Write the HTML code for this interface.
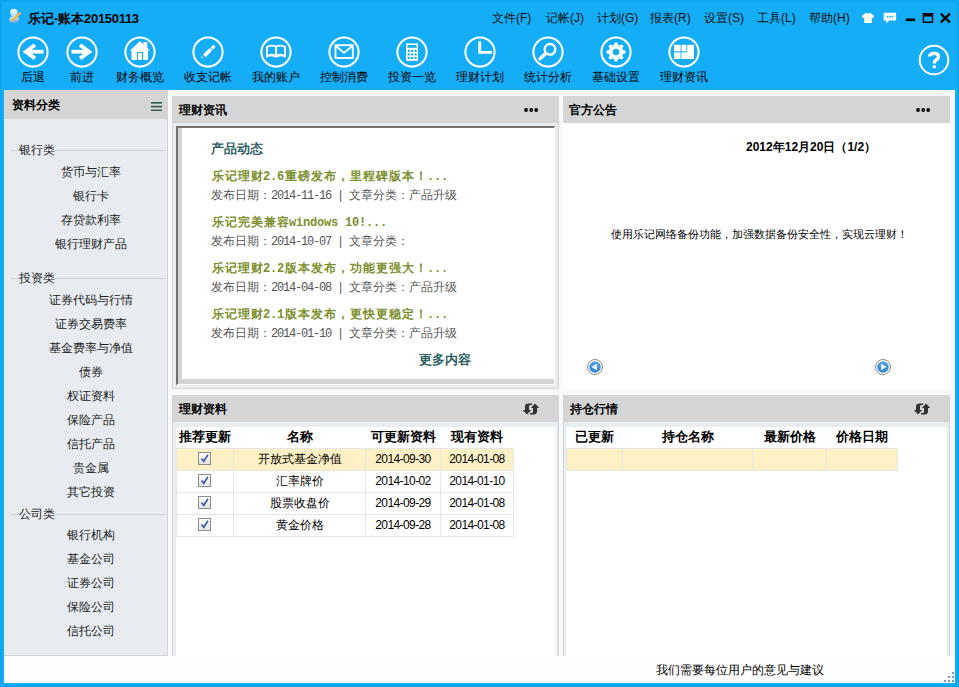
<!DOCTYPE html>
<html><head><meta charset="utf-8">
<style>
*{margin:0;padding:0;box-sizing:border-box}
html,body{width:959px;height:687px;overflow:hidden}
body{position:relative;background:#15adf5;font-family:"Liberation Sans",sans-serif;font-size:12px;color:#000}
.a{position:absolute}
.lf{left:0;top:0;width:2px;height:687px;background:#0aa6f0}
#content{left:4px;top:90px;width:951px;height:593px;background:#f8f9fb}
.title{left:28px;top:10px;font-size:13px;font-weight:bold;white-space:nowrap;letter-spacing:-0.3px}
.menu{top:9.5px;font-size:12px;white-space:nowrap;color:#111}
.tb{top:35px;width:68px;height:50px}
.tb svg{position:absolute;left:50%;top:1px;margin-left:-16px}
.tb span{position:absolute;left:0;right:0;top:34px;text-align:center;font-size:12px;white-space:nowrap;color:#000}
.hdr{background:#d5d5d5;height:27px;font-weight:bold;font-size:12px;line-height:27px;padding-left:6px;white-space:nowrap}
.dots{position:absolute;top:11px;right:18px}
.side{left:4px;top:90px;width:164px;height:566px;background:#e8ecf0;border-right:1px solid #d4d4d4;border-bottom:1px solid #d4d4d4}
.side .hdr{position:absolute;left:0;top:0;width:164px;height:29px;line-height:30px;padding-left:8px}
.grp{position:absolute;left:7px;width:155px;height:1px;background:#cfd3d6}
.grp span{position:absolute;left:8px;top:-8px;background:#e8ecf0;padding:0;line-height:16px;color:#222}
.it{position:absolute;left:0;width:164px;padding-left:9px;text-align:center;line-height:16px;color:#222;white-space:nowrap}
.panel{background:#e9edf0;border:1px solid #d4d4d4;border-top:0}
.ph{position:absolute;left:0;top:0;right:0;height:27px;background:#d5d5d5;font-weight:bold;line-height:28px;padding-left:6px}

.ib{position:absolute;left:3px;top:30px;width:379px;height:259px;border-top:2px solid #707070;border-left:2px solid #707070;border-right:1px solid #fff;border-bottom:1px solid #fff;background:#d4d4d4}
.ibw{position:absolute;left:4px;top:0;right:0;bottom:5px;background:#fff}
.nt{position:absolute;left:29px;font-size:12px;line-height:14px;font-weight:bold;color:#7b8f2c;white-space:nowrap}
.nt i{width:13px}
.nd{position:absolute;left:29px;font-size:12px;line-height:14px;color:#555;white-space:nowrap}
.nd b{font-family:"Liberation Mono",monospace;font-weight:normal;font-size:12px;letter-spacing:-1.2px}
.tbl{position:absolute;border-collapse:collapse;table-layout:fixed}
.tbl td,.tbl th{height:22px;text-align:center;white-space:nowrap;padding:0;overflow:hidden}
.tbl th{font-weight:bold;font-size:13px;height:21px}
.tbl td{border:1px solid #e6e6e6;font-size:12px}
.tbl .dt{letter-spacing:-0.6px}
.tbl tr.y td{background:#fdf0c5}
.cb{display:inline-block;width:13px;height:13px;border:1px solid #8c8c8c;background:linear-gradient(#fff,#e4e4e4);vertical-align:middle;position:relative;top:-1px;left:-1px}
.ref{position:absolute;right:19px;top:7.5px}
i{font-style:normal;display:inline-block;width:1em;text-align:center}
</style></head>
<body>
<div class="a lf"></div><div class="a" style="left:0;top:0;width:959px;height:2px;background:#0aa6f0"></div><div class="a" style="left:957px;top:0;width:2px;height:687px;background:#0aa6f0"></div><div class="a" style="left:0;top:685px;width:959px;height:2px;background:#0aa6f0"></div>
<!-- title bar -->
<svg class="a" style="left:4px;top:6px" width="24" height="22" viewBox="0 0 24 22">
 <defs><linearGradient id="hg" x1="0" y1="0" x2="0" y2="1"><stop offset="0" stop-color="#f0faff"/><stop offset="1" stop-color="#b8dffa"/></linearGradient>
 <linearGradient id="bg2" x1="0" y1="0" x2="0" y2="1"><stop offset="0" stop-color="#d8f0ff"/><stop offset="1" stop-color="#5d9ff0"/></linearGradient></defs>
 <ellipse cx="10" cy="13.6" rx="5" ry="3.6" fill="url(#bg2)"/>
 <circle cx="9.9" cy="6.4" r="3.7" fill="url(#hg)"/>
 <line x1="8.4" y1="14.5" x2="15.6" y2="7.7" stroke="#f3b62c" stroke-width="2.3" stroke-linecap="round"/>
 <circle cx="16" cy="7.3" r="1.1" fill="#f0a0a0"/>
</svg>
<div class="a title"><i>乐</i><i>记</i>-<i>账</i><i>本</i>20150113</div>
<div class="a menu" style="left:492px"><i>文</i><i>件</i>(F)</div>
<div class="a menu" style="left:546px"><i>记</i><i>帐</i>(J)</div>
<div class="a menu" style="left:597px"><i>计</i><i>划</i>(G)</div>
<div class="a menu" style="left:650px"><i>报</i><i>表</i>(R)</div>
<div class="a menu" style="left:704px"><i>设</i><i>置</i>(S)</div>
<div class="a menu" style="left:757px"><i>工</i><i>具</i>(L)</div>
<div class="a menu" style="left:809px"><i>帮</i><i>助</i>(H)</div>

<svg class="a" style="left:0;top:0" width="959" height="90" viewBox="0 0 959 90">
 <g fill="none" stroke="#fff" stroke-width="2.05">
  <circle cx="33" cy="52" r="14.6"/><circle cx="82" cy="52" r="14.6"/><circle cx="140" cy="52" r="14.6"/>
  <circle cx="208" cy="52" r="14.6"/><circle cx="276" cy="52" r="14.6"/><circle cx="344" cy="52" r="14.6"/>
  <circle cx="412" cy="52" r="14.6"/><circle cx="480" cy="52" r="14.6"/><circle cx="548" cy="52" r="14.6"/>
  <circle cx="616" cy="52" r="14.6"/><circle cx="684" cy="52" r="14.6"/>
  <circle cx="934" cy="60" r="14.3" stroke-width="2"/>
 </g>
 <!-- back -->
 <g fill="none" stroke="#fff" stroke-width="3.8" stroke-linejoin="miter">
  <polyline points="35,45 25.8,51.7 35,58.4"/><line x1="26" y1="51.7" x2="43.5" y2="51.7"/>
  <polyline points="80,45 89.2,51.7 80,58.4"/><line x1="89" y1="51.7" x2="71.5" y2="51.7"/>
 </g>
 <!-- house -->
 <path fill="#fff" d="M140,41 L150,50.6 L148,50.6 L148,60 L131.5,60 L131.5,50.6 L130,50.6 Z M143.5,42 L147.3,42 L147.3,48 L143.5,45 Z"/>
 <path fill="#15adf5" d="M137,52 h6.1 v8.4 h-6.1z"/><path fill="#fff" d="M138,53 h3.9 v6.9 h-3.9z"/>
 <!-- pencil -->
 <line x1="204.3" y1="55.9" x2="211" y2="49.3" stroke="#fff" stroke-width="3.6"/>
 <line x1="212.6" y1="47.6" x2="213.5" y2="46.7" stroke="#fff" stroke-width="3.4" stroke-linecap="round"/>
 <path fill="#fff" d="M200.9,58.3 L201.7,56.2 L203.1,57.6 Z"/>
 <!-- book -->
 <path fill="#fff" fill-rule="evenodd" d="M266,46.2 Q271,43.4 276,45.6 Q281,43.4 286,46.2 L286,57.8 Q281,54.8 276,57.8 Q271,54.8 266,57.8 Z M268,47.4 Q271.5,45.8 275,47.1 L275,54.4 Q271.5,52.8 268,54.6 Z M277.1,47.1 Q280.5,45.8 284,47.4 L284,54.6 Q280.5,52.8 277.1,54.4 Z"/>
 <!-- mail -->
 <g fill="none" stroke="#fff" stroke-width="1.9">
  <rect x="335.5" y="45.2" width="17.3" height="12.8"/>
  <polyline points="336,46 344,52.9 352.4,46" stroke-width="1.7"/>
 </g>
 <!-- calculator -->
 <rect x="406" y="43.4" width="12" height="17.4" fill="#fff"/>
 <g fill="#15adf5">
  <rect x="407.5" y="45" width="9" height="2.8"/>
  <circle cx="408.8" cy="50.9" r="1.2"/><circle cx="412.1" cy="50.9" r="1.2"/><circle cx="415.6" cy="50.9" r="1.2"/>
  <circle cx="408.8" cy="54.4" r="1.2"/><circle cx="412.1" cy="54.4" r="1.2"/><circle cx="415.6" cy="54.4" r="1.2"/>
  <circle cx="408.8" cy="57.9" r="1.2"/><circle cx="412.1" cy="57.9" r="1.2"/><circle cx="415.6" cy="57.9" r="1.2"/>
 </g>
 <!-- clock -->
 <path fill="#fff" d="M478.3,41.2 h2.9 v9.7 h10.7 v2.9 h-13.6 z"/>
 <!-- search -->
 <circle cx="550" cy="49.3" r="5.3" fill="none" stroke="#fff" stroke-width="2.4"/>
 <line x1="540" y1="58.8" x2="545.6" y2="53.6" stroke="#fff" stroke-width="3.4" stroke-linecap="round"/>
 <!-- gear -->
 <g fill="#fff">
  <circle cx="616" cy="52" r="7.4"/>
  <g id="teeth">
   <path d="M614.6,42.6 h2.8 l0.5,3 h-3.8z"/><path d="M614.6,61.4 h2.8 l0.5,-3 h-3.8z"/>
   <path d="M606.6,50.6 v2.8 l3,0.5 v-3.8z"/><path d="M625.4,50.6 v2.8 l-3,0.5 v-3.8z"/>
  </g>
  <use href="#teeth" transform="rotate(45 616 52)"/>
 </g>
 <circle cx="616" cy="52" r="3.2" fill="#15adf5"/>
 <!-- grid -->
 <g fill="#fff">
  <rect x="674" y="44.8" width="6.6" height="6.5"/>
  <rect x="681.4" y="44.8" width="5" height="6.5"/>
  <rect x="687.2" y="44.8" width="6.8" height="14.2"/>
  <rect x="681.4" y="52.4" width="12.6" height="6.6"/>
  <rect x="674" y="52.4" width="6.6" height="6.6"/>
 </g>
 <path d="M929.7,56.6 Q929.7,53.4 934.1,53.4 Q938.5,53.4 938.5,56.6 Q938.5,58.8 936.2,60 Q934.3,61 934.3,63.4" fill="none" stroke="#fff" stroke-width="3.3"/><circle cx="934.3" cy="66.8" r="1.8" fill="#fff"/>
 <!-- title icons -->
 <path fill="#fff" d="M865.5,13.1 L867.2,13.1 Q868,14.6 868.8,13.1 L870.5,13.1 L874.2,16 L873,18.3 L871.8,17.6 L871.8,22.9 L864.2,22.9 L864.2,17.6 L863,18.3 L861.7,16 Z"/>
 <path fill="#fff" d="M884.5,12.8 h10.8 q0.8,0 0.8,0.8 v6.2 q0,0.8 -0.8,0.8 h-6.3 l-2.7,3.1 v-3.1 h-1.8 q-0.8,0 -0.8,-0.8 v-6.2 q0,-0.8 0.8,-0.8z"/>
 <g fill="#15adf5"><rect x="886.8" y="16" width="1.6" height="1.6"/><rect x="889.3" y="16" width="1.6" height="1.6"/><rect x="891.8" y="16" width="1.6" height="1.6"/></g>
 <rect x="905.8" y="18.5" width="9.4" height="2.6" fill="#000"/>
 <path fill="#000" d="M922.7,13.1 h10.5 v9.8 h-10.5z M924.1,16.4 v5.1 h7.7 v-5.1z" fill-rule="evenodd"/>
 <g stroke="#000" stroke-width="2.2"><line x1="940.8" y1="13.6" x2="949.9" y2="22.4"/><line x1="949.9" y1="13.6" x2="940.8" y2="22.4"/></g>
</svg>
<div class="a tb" style="left:-1px"><span><i>后</i><i>退</i></span></div>
<div class="a tb" style="left:48px"><span><i>前</i><i>进</i></span></div>
<div class="a tb" style="left:106px"><span><i>财</i><i>务</i><i>概</i><i>览</i></span></div>
<div class="a tb" style="left:174px"><span><i>收</i><i>支</i><i>记</i><i>帐</i></span></div>
<div class="a tb" style="left:242px"><span><i>我</i><i>的</i><i>账</i><i>户</i></span></div>
<div class="a tb" style="left:310px"><span><i>控</i><i>制</i><i>消</i><i>费</i></span></div>
<div class="a tb" style="left:378px"><span><i>投</i><i>资</i><i>一</i><i>览</i></span></div>
<div class="a tb" style="left:446px"><span><i>理</i><i>财</i><i>计</i><i>划</i></span></div>
<div class="a tb" style="left:514px"><span><i>统</i><i>计</i><i>分</i><i>析</i></span></div>
<div class="a tb" style="left:582px"><span><i>基</i><i>础</i><i>设</i><i>置</i></span></div>
<div class="a tb" style="left:650px"><span><i>理</i><i>财</i><i>资</i><i>讯</i></span></div>

<div id="content" class="a"></div>

<!-- sidebar -->
<div class="a side">
 <div class="hdr"><i>资</i><i>料</i><i>分</i><i>类</i></div>
 <div class="grp" style="top:60px"><span><i>银</i><i>行</i><i>类</i></span></div>
 <div class="it" style="top:73.5px"><i>货</i><i>币</i><i>与</i><i>汇</i><i>率</i></div>
 <div class="it" style="top:97.5px"><i>银</i><i>行</i><i>卡</i></div>
 <div class="it" style="top:121.5px"><i>存</i><i>贷</i><i>款</i><i>利</i><i>率</i></div>
 <div class="it" style="top:145.5px"><i>银</i><i>行</i><i>理</i><i>财</i><i>产</i><i>品</i></div>
 <div class="grp" style="top:188px"><span><i>投</i><i>资</i><i>类</i></span></div>
 <div class="it" style="top:201.5px"><i>证</i><i>券</i><i>代</i><i>码</i><i>与</i><i>行</i><i>情</i></div>
 <div class="it" style="top:225.5px"><i>证</i><i>券</i><i>交</i><i>易</i><i>费</i><i>率</i></div>
 <div class="it" style="top:249.5px"><i>基</i><i>金</i><i>费</i><i>率</i><i>与</i><i>净</i><i>值</i></div>
 <div class="it" style="top:273.5px"><i>债</i><i>券</i></div>
 <div class="it" style="top:297.5px"><i>权</i><i>证</i><i>资</i><i>料</i></div>
 <div class="it" style="top:321.5px"><i>保</i><i>险</i><i>产</i><i>品</i></div>
 <div class="it" style="top:345.5px"><i>信</i><i>托</i><i>产</i><i>品</i></div>
 <div class="it" style="top:369.5px"><i>贵</i><i>金</i><i>属</i></div>
 <div class="it" style="top:393.5px"><i>其</i><i>它</i><i>投</i><i>资</i></div>
 <div class="grp" style="top:424px"><span><i>公</i><i>司</i><i>类</i></span></div>
 <div class="it" style="top:437px"><i>银</i><i>行</i><i>机</i><i>构</i></div>
 <div class="it" style="top:461px"><i>基</i><i>金</i><i>公</i><i>司</i></div>
 <div class="it" style="top:485px"><i>证</i><i>券</i><i>公</i><i>司</i></div>
 <div class="it" style="top:509px"><i>保</i><i>险</i><i>公</i><i>司</i></div>
 <div class="it" style="top:533px"><i>信</i><i>托</i><i>公</i><i>司</i></div>
 <svg style="position:absolute;left:147px;top:12px" width="11" height="9"><g fill="#2c5a4c"><rect x="0" y="0" width="11" height="1.6"/><rect x="0" y="3.8" width="11" height="1.6"/><rect x="0" y="7.6" width="11" height="1.6"/></g></svg>
</div>

<!-- panels -->
<div class="a panel" style="left:172px;top:96px;width:387px;height:293px"><div class="ph"><i>理</i><i>财</i><i>资</i><i>讯</i><svg class="dots" width="16" height="6" viewBox="0 0 16 6"><g fill="#000"><circle cx="2" cy="3" r="1.9"/><circle cx="7.2" cy="3" r="1.9"/><circle cx="12.2" cy="3" r="1.9"/></g></svg></div><div class="ib"><div class="ibw"><div class="nt" style="top:13.5px;color:#2f5f62;font-size:13px"><i>产</i><i>品</i><i>动</i><i>态</i></div><div class="nt" style="top:41px"><i>乐</i><i>记</i><i>理</i><i>财</i><b style="font-family:Liberation Mono;font-size:12px;letter-spacing:-0.2px">2.6</b><i>重</i><i>磅</i><i>发</i><i>布</i><i>，</i><i>里</i><i>程</i><i>碑</i><i>版</i><i>本</i><i>！</i><b style="font-family:Liberation Mono;font-size:12px;letter-spacing:-0.2px">...</b></div><div class="nd" style="top:59.5px"><i>发</i><i>布</i><i>日</i><i>期</i><i>：</i><b>2014-11-16 | </b><i>文</i><i>章</i><i>分</i><i>类</i><i>：</i><i>产</i><i>品</i><i>升</i><i>级</i></div><div class="nt" style="top:87px"><i>乐</i><i>记</i><i>完</i><i>美</i><i>兼</i><i>容</i><b style="font-family:Liberation Mono;font-size:12px;letter-spacing:-0.2px">windows 10!...</b></div><div class="nd" style="top:105.5px"><i>发</i><i>布</i><i>日</i><i>期</i><i>：</i><b>2014-10-07 | </b><i>文</i><i>章</i><i>分</i><i>类</i><i>：</i></div><div class="nt" style="top:133px"><i>乐</i><i>记</i><i>理</i><i>财</i><b style="font-family:Liberation Mono;font-size:12px;letter-spacing:-0.2px">2.2</b><i>版</i><i>本</i><i>发</i><i>布</i><i>，</i><i>功</i><i>能</i><i>更</i><i>强</i><i>大</i><i>！</i><b style="font-family:Liberation Mono;font-size:12px;letter-spacing:-0.2px">...</b></div><div class="nd" style="top:151.5px"><i>发</i><i>布</i><i>日</i><i>期</i><i>：</i><b>2014-04-08 | </b><i>文</i><i>章</i><i>分</i><i>类</i><i>：</i><i>产</i><i>品</i><i>升</i><i>级</i></div><div class="nt" style="top:179px"><i>乐</i><i>记</i><i>理</i><i>财</i><b style="font-family:Liberation Mono;font-size:12px;letter-spacing:-0.2px">2.1</b><i>版</i><i>本</i><i>发</i><i>布</i><i>，</i><i>更</i><i>快</i><i>更</i><i>稳</i><i>定</i><i>！</i><b style="font-family:Liberation Mono;font-size:12px;letter-spacing:-0.2px">...</b></div><div class="nd" style="top:197.5px"><i>发</i><i>布</i><i>日</i><i>期</i><i>：</i><b>2014-01-10 | </b><i>文</i><i>章</i><i>分</i><i>类</i><i>：</i><i>产</i><i>品</i><i>升</i><i>级</i></div><div class="nt" style="top:225px;left:237px;color:#2f5f62;font-size:13px"><i>更</i><i>多</i><i>内</i><i>容</i></div></div></div></div>
<div class="a" style="left:563px;top:96px;width:387px;height:293px;background:#fff"><div class="ph"><i>官</i><i>方</i><i>公</i><i>告</i><svg class="dots" width="16" height="6" viewBox="0 0 16 6"><g fill="#000"><circle cx="2" cy="3" r="1.9"/><circle cx="7.2" cy="3" r="1.9"/><circle cx="12.2" cy="3" r="1.9"/></g></svg></div><div class="a" style="left:183px;top:44px;font-weight:bold;font-size:12px;line-height:14px;white-space:nowrap">2012<i>年</i>12<i>月</i>20<i>日</i><i>（</i>1/2<i>）</i></div><div class="a" style="left:48px;top:131px;font-size:11px;line-height:14px;white-space:nowrap"><i>使</i><i>用</i><i>乐</i><i>记</i><i>网</i><i>络</i><i>备</i><i>份</i><i>功</i><i>能</i><i>，</i><i>加</i><i>强</i><i>数</i><i>据</i><i>备</i><i>份</i><i>安</i><i>全</i><i>性</i><i>，</i><i>实</i><i>现</i><i>云</i><i>理</i><i>财</i><i>！</i></div><svg class="a" style="left:24px;top:262.7px" width="16" height="16" viewBox="0 0 16 16"><defs><linearGradient id="gl" x1="0" y1="0" x2="0" y2="1"><stop offset="0" stop-color="#5aa6e6"/><stop offset="1" stop-color="#2f7fcf"/></linearGradient></defs><circle cx="8" cy="8" r="7.5" fill="#fff" stroke="#8a8a8a" stroke-width="1"/><circle cx="8" cy="8" r="5.8" fill="url(#gl)"/><path fill="#fff" d="M4.6,8 L9.9,4.7 L9.9,11.3Z"/></svg><svg class="a" style="left:312.4px;top:262.7px" width="16" height="16" viewBox="0 0 16 16"><defs><linearGradient id="gr" x1="0" y1="0" x2="0" y2="1"><stop offset="0" stop-color="#5aa6e6"/><stop offset="1" stop-color="#2f7fcf"/></linearGradient></defs><circle cx="8" cy="8" r="7.5" fill="#fff" stroke="#8a8a8a" stroke-width="1"/><circle cx="8" cy="8" r="5.8" fill="url(#gr)"/><path fill="#fff" d="M11.4,8 L6.1,4.7 L6.1,11.3Z"/></svg></div>
<div class="a panel" style="left:172px;top:395px;width:387px;height:261px;border-bottom:0"><div class="ph"><i>理</i><i>财</i><i>资</i><i>料</i><svg class="ref" width="16" height="12" viewBox="0 0 16 12"><path fill="#333" d="M5.5,0.5 L9,0.5 L9,2 L7,2 Q6,2 6,3.5 L6,7 L8.2,7 L4,11.5 L-0.2,7 L2,7 L2,3.5 Q2,0.5 5.5,0.5Z M10.5,11.5 L7,11.5 L7,10 L9,10 Q10,10 10,8.5 L10,5 L7.8,5 L12,0.5 L16.2,5 L14,5 L14,8.5 Q14,11.5 10.5,11.5Z"/></svg></div><div class="a" style="left:3px;top:32px;width:380px;height:229px;background:#fff"></div><table class="tbl" style="left:3px;top:32px;width:337px"><colgroup><col style="width:57px"><col style="width:132px"><col style="width:75px"><col style="width:73px"></colgroup><tr><th><i>推</i><i>荐</i><i>更</i><i>新</i></th><th><i>名</i><i>称</i></th><th><i>可</i><i>更</i><i>新</i><i>资</i><i>料</i></th><th><i>现</i><i>有</i><i>资</i><i>料</i></th></tr><tr class=y><td><span class="cb"><svg width="11" height="11" style="position:absolute;left:0;top:0"><path d="M2.5,5.5 L4.8,8.3 L9,1.8" fill="none" stroke="#3b56a8" stroke-width="1.6"/></svg></span></td><td><i>开</i><i>放</i><i>式</i><i>基</i><i>金</i><i>净</i><i>值</i></td><td class="dt">2014-09-30</td><td class="dt">2014-01-08</td></tr><tr><td><span class="cb"><svg width="11" height="11" style="position:absolute;left:0;top:0"><path d="M2.5,5.5 L4.8,8.3 L9,1.8" fill="none" stroke="#3b56a8" stroke-width="1.6"/></svg></span></td><td><i>汇</i><i>率</i><i>牌</i><i>价</i></td><td class="dt">2014-10-02</td><td class="dt">2014-01-10</td></tr><tr><td><span class="cb"><svg width="11" height="11" style="position:absolute;left:0;top:0"><path d="M2.5,5.5 L4.8,8.3 L9,1.8" fill="none" stroke="#3b56a8" stroke-width="1.6"/></svg></span></td><td><i>股</i><i>票</i><i>收</i><i>盘</i><i>价</i></td><td class="dt">2014-09-29</td><td class="dt">2014-01-08</td></tr><tr><td><span class="cb"><svg width="11" height="11" style="position:absolute;left:0;top:0"><path d="M2.5,5.5 L4.8,8.3 L9,1.8" fill="none" stroke="#3b56a8" stroke-width="1.6"/></svg></span></td><td><i>黄</i><i>金</i><i>价</i><i>格</i></td><td class="dt">2014-09-28</td><td class="dt">2014-01-08</td></tr></table></div>
<div class="a panel" style="left:563px;top:395px;width:387px;height:261px;border-bottom:0"><div class="ph"><i>持</i><i>仓</i><i>行</i><i>情</i><svg class="ref" width="16" height="12" viewBox="0 0 16 12"><path fill="#333" d="M5.5,0.5 L9,0.5 L9,2 L7,2 Q6,2 6,3.5 L6,7 L8.2,7 L4,11.5 L-0.2,7 L2,7 L2,3.5 Q2,0.5 5.5,0.5Z M10.5,11.5 L7,11.5 L7,10 L9,10 Q10,10 10,8.5 L10,5 L7.8,5 L12,0.5 L16.2,5 L14,5 L14,8.5 Q14,11.5 10.5,11.5Z"/></svg></div><div class="a" style="left:2px;top:32px;width:381px;height:229px;background:#fff"></div><table class="tbl" style="left:2px;top:32px;width:331px"><colgroup><col style="width:56px"><col style="width:130px"><col style="width:74px"><col style="width:71px"></colgroup><tr><th><i>已</i><i>更</i><i>新</i></th><th><i>持</i><i>仓</i><i>名</i><i>称</i></th><th><i>最</i><i>新</i><i>价</i><i>格</i></th><th><i>价</i><i>格</i><i>日</i><i>期</i></th></tr><tr class="y"><td></td><td></td><td></td><td></td></tr></table></div>

<div class="a" style="left:4px;top:656px;width:951px;height:27px;background:#fefefe"></div>
<div class="a" style="left:656px;top:662px;font-size:12px;white-space:nowrap"><i>我</i><i>们</i><i>需</i><i>要</i><i>每</i><i>位</i><i>用</i><i>户</i><i>的</i><i>意</i><i>见</i><i>与</i><i>建</i><i>议</i></div>
<svg class="a" style="left:943px;top:671px" width="12" height="12"><g fill="#7b9acb"><rect x="9" y="1" width="2" height="2"/><rect x="5" y="5" width="2" height="2"/><rect x="9" y="5" width="2" height="2"/><rect x="1" y="9" width="2" height="2"/><rect x="5" y="9" width="2" height="2"/><rect x="9" y="9" width="2" height="2"/></g></svg>
</body></html>
